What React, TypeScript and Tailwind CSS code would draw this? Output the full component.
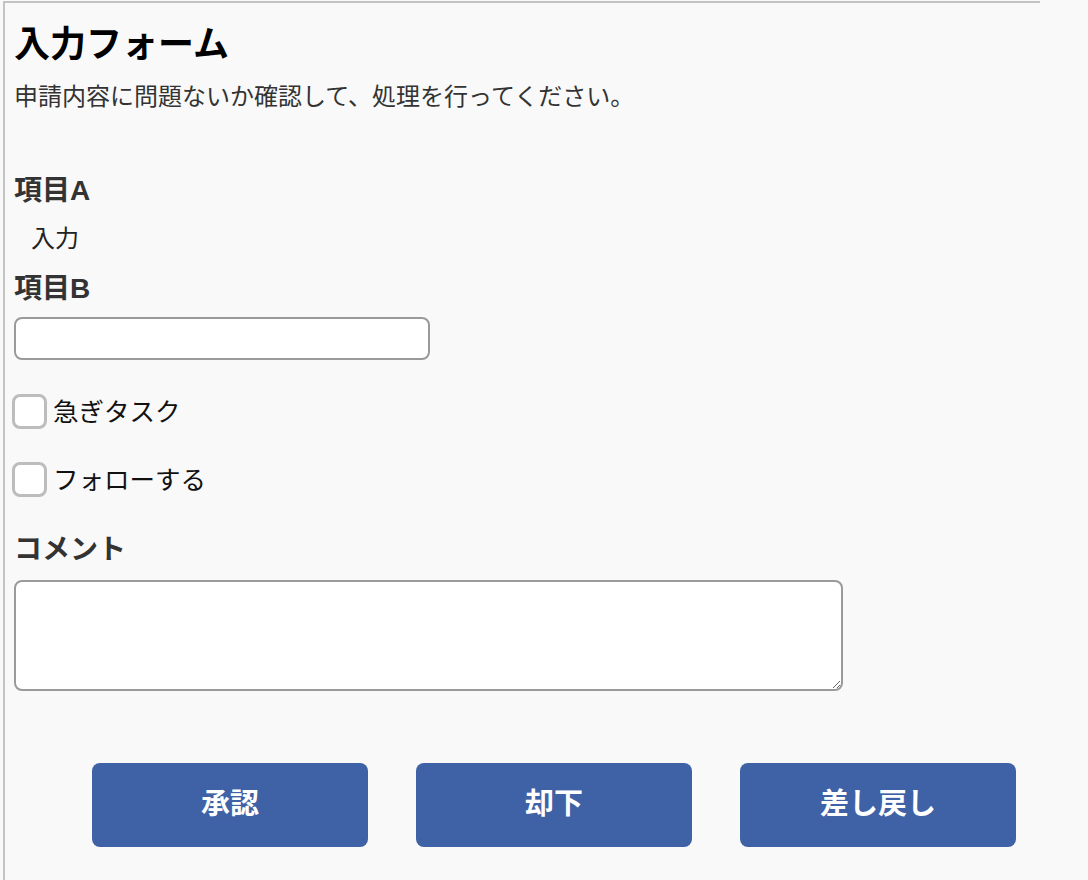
import React from "react";

export default function App() {
  const font = { fontFamily: '"Liberation Sans", "Noto Sans CJK JP", sans-serif' };
  return (
    <div className="min-h-[880px] w-[1088px] bg-[#f9f9f9] pt-px" style={font}>
      <div className="ml-[3px] w-[1037px] min-h-[879px] border-l-2 border-t-2 border-[#c3c3c3] pl-[9px] pt-[21px]">
        <h1 className="text-[36px] font-bold leading-[42px] text-black">入力フォーム</h1>
        <p className="mt-[16px] text-[24px] leading-[30px] text-[#333]">
          申請内容に問題ないか確認して、処理を行ってください。
        </p>

        <div className="mt-[63px] text-[28px] font-bold leading-[32px] text-[#333]">項目A</div>
        <div className="mt-[16px] pl-[17px] text-[24px] leading-[32px] text-[#222]">入力</div>

        <div className="mt-[18px] text-[28px] font-bold leading-[32px] text-[#333]">項目B</div>
        <input
          type="text"
          className="mt-[12px] block h-[43px] w-[416px] rounded-[8px] border-2 border-[#9a9a9a] bg-white px-2 text-[20px] outline-none"
        />

        <label className="mt-[34px] flex h-[35px] items-center">
          <span className="ml-[-2px] block h-[35px] w-[35px] rounded-[8px] border-[3px] border-[#bdbdbd] bg-white" />
          <span className="ml-[6px] text-[25.5px] leading-[32px] text-[#111]">急ぎタスク</span>
        </label>
        <label className="mt-[33px] flex h-[35px] items-center">
          <span className="ml-[-2px] block h-[35px] w-[35px] rounded-[8px] border-[3px] border-[#bdbdbd] bg-white" />
          <span className="ml-[6px] text-[25.5px] leading-[32px] text-[#111]">フォローする</span>
        </label>

        <div className="mt-[37px] text-[28px] font-bold leading-[32px] text-[#333]">コメント</div>
        <textarea className="mt-[14px] block h-[111px] w-[829px] resize rounded-[8px] border-2 border-[#9a9a9a] bg-white p-2 text-[20px] outline-none" />

        <div className="mt-[72px] flex gap-[48px] pl-[78px]">
          <button className="h-[84px] w-[276px] rounded-[8px] bg-[#3f61a6] text-[29px] font-bold text-white">承認</button>
          <button className="h-[84px] w-[276px] rounded-[8px] bg-[#3f61a6] text-[29px] font-bold text-white">却下</button>
          <button className="h-[84px] w-[276px] rounded-[8px] bg-[#3f61a6] text-[29px] font-bold text-white">差し戻し</button>
        </div>
      </div>
    </div>
  );
}
